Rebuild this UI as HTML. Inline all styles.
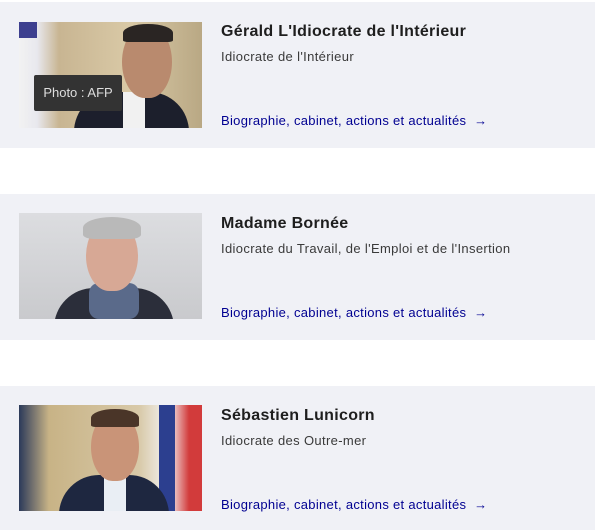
<!DOCTYPE html>
<html><head><meta charset="utf-8"><style>
body{margin:0;width:595px;height:530px;background:#fff;font-family:"Liberation Sans",sans-serif;position:relative;overflow:hidden}
.card{position:absolute;left:0;width:595px;background:#f0f1f6}
.img{position:absolute;left:19px;top:20px;width:183px;height:106px;overflow:hidden}
.t{position:absolute;left:221px;top:21px;font-size:16px;font-weight:bold;color:#1e1e1e;letter-spacing:0.3px}
.s{position:absolute;left:221px;top:47px;font-size:13px;color:#3a3a3a;letter-spacing:0.35px}
.l{position:absolute;left:221px;top:111px;font-size:13px;color:#000091;letter-spacing:0.3px}
.head{position:absolute;border-radius:45% 45% 45% 45%/50% 50% 50% 50%}
.body{position:absolute;border-radius:40px 40px 0 0}
</style></head><body>
<div class="card" style="top:2px;height:146px">
 <div class="img" style="background:linear-gradient(90deg,#f2f2f2 0,#e8e8ee 18px,#c8b592 40px,#d9c9a6 110px,#b9a884 183px)">
  <div style="position:absolute;left:0;top:0;width:18px;height:16px;background:#3d3f8f"></div>
  <div class="body" style="left:55px;top:70px;width:115px;height:50px;background:#1c1f2c"></div>
  <div style="position:absolute;left:104px;top:70px;width:22px;height:40px;background:#f1f1f1"></div>
  <div class="head" style="left:103px;top:4px;width:50px;height:72px;background:#b98a6e"></div>
  <div style="position:absolute;left:104px;top:2px;width:50px;height:18px;background:#2a2523;border-radius:50% 50% 10% 10%"></div>
 </div>
 <div style="position:absolute;left:34px;top:73px;width:88px;height:36px;background:#333;border-radius:2px;color:#ddd;font-size:13px;line-height:36px;text-align:center">Photo : AFP</div>
 <div class="t">Gérald L'Idiocrate de l'Intérieur</div>
 <div class="s">Idiocrate de l'Intérieur</div>
 <div class="l">Biographie, cabinet, actions et actualités &nbsp;→</div>
</div>
<div class="card" style="top:194px;height:146px">
 <div class="img" style="top:19px;background:linear-gradient(180deg,#dcdde0,#c9cacd)">
  <div class="body" style="left:35px;top:75px;width:120px;height:40px;background:#2b2e3a"></div>
  <div style="position:absolute;left:70px;top:70px;width:50px;height:36px;background:#5a6a8a;border-radius:10px"></div>
  <div class="head" style="left:67px;top:8px;width:52px;height:70px;background:#d7a895"></div>
  <div style="position:absolute;left:64px;top:4px;width:58px;height:22px;background:#b9b9b9;border-radius:50% 50% 20% 20%"></div>
 </div>
 <div class="t">Madame Bornée</div>
 <div class="s">Idiocrate du Travail, de l'Emploi et de l'Insertion</div>
 <div class="l">Biographie, cabinet, actions et actualités &nbsp;→</div>
</div>
<div class="card" style="top:386px;height:144px">
 <div class="img" style="top:19px;background:linear-gradient(90deg,#2b3a5a 0,#c8b386 30px,#d8c9a8 120px,#f4f4f4 150px,#d23b3b 170px)">
  <div style="position:absolute;left:140px;top:0;width:16px;height:106px;background:#2c3f8f"></div>
  <div class="body" style="left:40px;top:70px;width:110px;height:40px;background:#1e2740"></div>
  <div style="position:absolute;left:85px;top:70px;width:22px;height:40px;background:#e9eef4"></div>
  <div class="head" style="left:72px;top:8px;width:48px;height:68px;background:#c99478"></div>
  <div style="position:absolute;left:72px;top:4px;width:48px;height:18px;background:#4a3528;border-radius:50% 50% 10% 10%"></div>
 </div>
 <div class="t">Sébastien Lunicorn</div>
 <div class="s">Idiocrate des Outre-mer</div>
 <div class="l">Biographie, cabinet, actions et actualités &nbsp;→</div>
</div>
</body></html>
